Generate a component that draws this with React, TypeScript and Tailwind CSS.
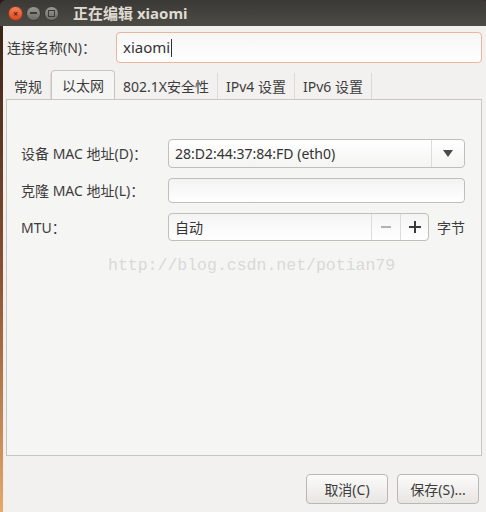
import React from "react";

const font = { fontFamily: '"Noto Sans", "Noto Sans CJK SC", sans-serif' };

function TitleBar() {
  return (
    <div className="h-[26px] flex items-center bg-gradient-to-b from-[#3a3935] to-[#4d4b46] rounded-tl-[6px] rounded-tr-[2px]">
      <div className="flex items-center gap-[3px] pl-[8px]">
        <div className="w-[15px] h-[15px] rounded-full bg-gradient-to-b from-[#f5805a] to-[#d9471c] border border-[#8a3a1e] flex items-center justify-center text-[#5c1e0c] text-[9px] font-bold leading-none">
          ×
        </div>
        <div className="w-[15px] h-[15px] rounded-full bg-gradient-to-b from-[#9a9892] to-[#6e6c67] border border-[#3b3a37] flex items-center justify-center">
          <div className="w-[7px] h-[2px] bg-[#3d3c38]" />
        </div>
        <div className="w-[15px] h-[15px] rounded-full bg-gradient-to-b from-[#9a9892] to-[#6e6c67] border border-[#3b3a37] flex items-center justify-center">
          <div className="w-[7px] h-[7px] border-[1.5px] border-[#3d3c38]" />
        </div>
      </div>
      <div className="ml-[14px] text-[15px] font-bold text-[#dfdbd2] leading-none">
        正在编辑 xiaomi
      </div>
    </div>
  );
}

function Tab({ label, active }: { label: string; active?: boolean }) {
  if (active) {
    return (
      <div className="h-[29px] px-[10px] flex items-center bg-[#f5f5f4] border border-b-0 border-[#c9c6c0] rounded-t-[4px] -mb-px relative z-10 text-[#3c3c3c]">
        {label}
      </div>
    );
  }
  return (
    <div className="h-[26px] mt-[3px] px-[8px] flex items-center text-[#3c3c3c] border-r border-[#dcdad5]">
      {label}
    </div>
  );
}

function Row({ label, children }: { label: string; children: React.ReactNode }) {
  return (
    <div className="flex items-center">
      <div className="w-[147px] text-[#3c3c3c]">{label}</div>
      {children}
    </div>
  );
}

export default function App() {
  return (
    <div
      className="w-[486px] h-[512px] flex flex-col bg-gradient-to-b from-[#2c1a14] to-[#c8773c] text-[14px] overflow-hidden"
      style={font}
    >
      <TitleBar />
      <div className="flex-1 flex">
        <div className="w-[3px] bg-gradient-to-b from-[#3a2418] via-[#8a5030] to-[#e8a868]" />
        <div className="flex-1 bg-[#f2f1f0] flex flex-col pl-[3px] pr-[4px]">
          <div className="flex items-center mt-[6px]">
            <div className="w-[110px] pl-[1px] text-[#3c3c3c]">连接名称(N)：</div>
            <div className="flex-1 h-[31px] rounded-[4px] border border-[#e9b59b] bg-gradient-to-b from-[#f6f6f6] to-[#ffffff] flex items-center pl-[6px] text-[15px] text-[#333]">
              xiaomi<span className="w-px h-[18px] bg-[#333] ml-px" />
            </div>
          </div>

          <div className="flex mt-[7px]">
            <Tab label="常规" />
            <Tab label="以太网" active />
            <Tab label="802.1X安全性" />
            <Tab label="IPv4 设置" />
            <Tab label="IPv6 设置" />
          </div>

          <div className="h-[357px] border border-[#c9c6c0] bg-[#f5f5f4] pt-[39px] pl-[14px] pr-[16px] flex flex-col gap-[10px]">
            <Row label="设备 MAC 地址(D)：">
              <div className="flex-1 h-[29px] rounded-[4px] border border-[#c2beb8] bg-gradient-to-b from-[#ffffff] to-[#f4f4f3] flex items-center text-[#333]">
                <div className="flex-1 pl-[6px]">28:D2:44:37:84:FD (eth0)</div>
                <div className="w-[33px] h-full border-l border-[#dedcd8] flex items-center justify-center">
                  <svg width="10" height="8" viewBox="0 0 10 8">
                    <path d="M0 0 H10 L5 7 Z" fill="#4a4a4a" />
                  </svg>
                </div>
              </div>
            </Row>
            <Row label="克隆 MAC 地址(L)：">
              <div className="flex-1 h-[25px] rounded-[4px] border border-[#c2beb8] bg-gradient-to-b from-[#f3f3f3] to-[#ffffff]" />
            </Row>
            <Row label="MTU：">
              <div className="w-[261px] h-[28px] rounded-[4px] border border-[#c2beb8] bg-gradient-to-b from-[#f4f4f4] to-[#ffffff] flex items-center text-[#333]">
                <div className="flex-1 pl-[6px]">自动</div>
                <div className="w-[29px] h-full border-l border-[#dedcd8] flex items-center justify-center">
                  <div className="w-[10px] h-[2px] bg-[#b4b2ad]" />
                </div>
                <div className="w-[28px] h-full border-l border-[#dedcd8] flex items-center justify-center relative">
                  <div className="w-[12px] h-[2px] bg-[#3a3a3a]" />
                  <div className="absolute w-[2px] h-[12px] bg-[#3a3a3a]" />
                </div>
              </div>
              <div className="ml-[8px] text-[#3c3c3c]">字节</div>
            </Row>
            <div
              className="mt-[7px] ml-[87px] text-[16.5px] leading-none text-[#d9d9d9]"
              style={{ fontFamily: '"Liberation Mono", monospace' }}
            >
              http://blog.csdn.net/potian79
            </div>
          </div>

          <div className="flex justify-end gap-[9px] mt-[18px] pr-[3px]">
            <button className="w-[82px] h-[30px] rounded-[4px] border border-[#bcb8b1] bg-gradient-to-b from-[#fbfbfa] to-[#e8e6e3] text-[#3c3c3c]">
              取消(C)
            </button>
            <button className="w-[82px] h-[30px] rounded-[4px] border border-[#bcb8b1] bg-gradient-to-b from-[#fbfbfa] to-[#e8e6e3] text-[#3c3c3c]">
              保存(S)...
            </button>
          </div>
        </div>
      </div>
    </div>
  );
}
